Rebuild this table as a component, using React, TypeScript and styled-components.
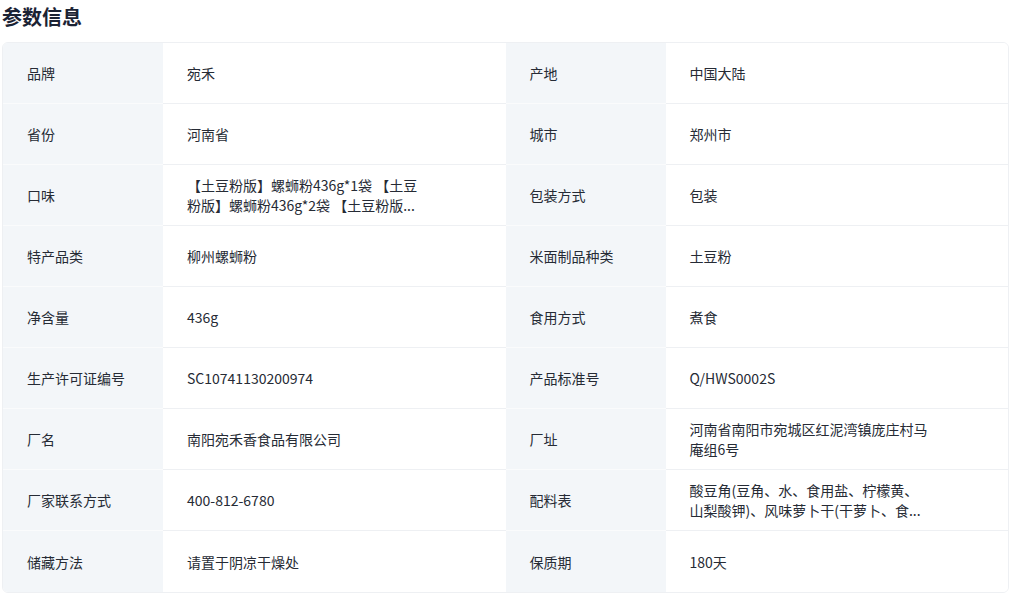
import React from "react";
import styled, { createGlobalStyle } from "styled-components";

const Global = createGlobalStyle`
  html, body { margin: 0; padding: 0; background: #ffffff; }
  body { font-family: "Noto Sans CJK SC", "Noto Sans", sans-serif; }
`;

const Page = styled.div`
  padding: 0 1px 0 2px;
  width: 1010px;
  box-sizing: border-box;
`;

const Title = styled.h2`
  margin: 3px 0 11px 0;
  font-size: 20px;
  line-height: 28px;
  font-weight: 700;
  color: #1b2334;
`;

const Table = styled.div`
  display: grid;
  grid-template-columns: 160px 1fr 160px 1fr;
  border: 1px solid #eef0f3;
  border-radius: 6px;
  overflow: hidden;
`;

const Cell = styled.div<{ $label?: boolean; $last?: boolean }>`
  height: 61px;
  box-sizing: border-box;
  display: flex;
  align-items: center;
  padding: 0 24px;
  font-size: 14px;
  line-height: 20px;
  color: #262b35;
  background: ${(p) => (p.$label ? "#f3f6f9" : "#ffffff")};
  border-bottom: ${(p) =>
    p.$last ? "none" : p.$label ? "1px solid #fafbfc" : "1px solid #eef0f3"};
`;

const Value = styled.span`
  max-width: 241px;
  word-break: break-all;
`;

const rows: [string, string, string, string][] = [
  ["品牌", "宛禾", "产地", "中国大陆"],
  ["省份", "河南省", "城市", "郑州市"],
  [
    "口味",
    "【土豆粉版】螺蛳粉436g*1袋 【土豆粉版】螺蛳粉436g*2袋 【土豆粉版...",
    "包装方式",
    "包装",
  ],
  ["特产品类", "柳州螺蛳粉", "米面制品种类", "土豆粉"],
  ["净含量", "436g", "食用方式", "煮食"],
  ["生产许可证编号", "SC10741130200974", "产品标准号", "Q/HWS0002S"],
  ["厂名", "南阳宛禾香食品有限公司", "厂址", "河南省南阳市宛城区红泥湾镇庞庄村马庵组6号"],
  [
    "厂家联系方式",
    "400-812-6780",
    "配料表",
    "酸豆角(豆角、水、食用盐、柠檬黄、山梨酸钾)、风味萝卜干(干萝卜、食...",
  ],
  ["储藏方法", "请置于阴凉干燥处", "保质期", "180天"],
];

export default function App() {
  return (
    <Page>
      <Global />
      <Title>参数信息</Title>
      <Table>
        {rows.map((r, i) => {
          const last = i === rows.length - 1;
          return (
            <React.Fragment key={i}>
              <Cell $label $last={last}>{r[0]}</Cell>
              <Cell $last={last}>
                <Value>{r[1]}</Value>
              </Cell>
              <Cell $label $last={last}>{r[2]}</Cell>
              <Cell $last={last}>
                <Value>{r[3]}</Value>
              </Cell>
            </React.Fragment>
          );
        })}
      </Table>
    </Page>
  );
}
